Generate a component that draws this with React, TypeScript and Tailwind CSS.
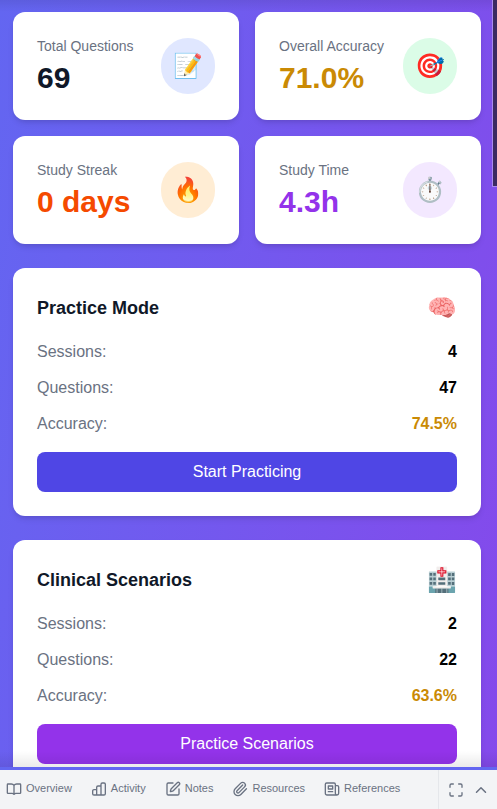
import type { ReactNode } from "react";
import { SquarePen, Paperclip, ChevronUp } from "lucide-react";

type Stat = { label: string; value: string; color: string; icon: string; iconBg: string };

const stats: Stat[] = [
  { label: "Total Questions", value: "69", color: "text-gray-900", icon: "📝", iconBg: "bg-indigo-100" },
  { label: "Overall Accuracy", value: "71.0%", color: "text-[#ca8a04]", icon: "🎯", iconBg: "bg-green-100" },
  { label: "Study Streak", value: "0 days", color: "text-[#f54a00]", icon: "🔥", iconBg: "bg-orange-100" },
  { label: "Study Time", value: "4.3h", color: "text-[#9333ea]", icon: "⏱️", iconBg: "bg-purple-100" },
];

const modes = [
  { title: "Practice Mode", icon: "🧠", sessions: "4", questions: "47", accuracy: "74.5%", action: "Start Practicing", button: "bg-[#4f46e5]" },
  { title: "Clinical Scenarios", icon: "🏥", sessions: "2", questions: "22", accuracy: "63.6%", action: "Practice Scenarios", button: "bg-[#9333ea]" },
];

function Icon({ children }: { children: ReactNode }) {
  return (
    <svg width="16" height="16" viewBox="0 0 24 24" fill="none" stroke="currentColor" strokeWidth="2" strokeLinecap="round" strokeLinejoin="round" aria-hidden="true">
      {children}
    </svg>
  );
}

const tabs = [
  {
    label: "Overview",
    icon: (
      <Icon>
        <path d="M12 6.500C11 5 9.500 4.500 8 4.500H3a1 1 0 0 0-1 1v12a1 1 0 0 0 1 1h6c1.500 0 2.500.5 3 1.500.5-1 1.500-1.500 3-1.500h6a1 1 0 0 0 1-1v-12a1 1 0 0 0-1-1h-5c-1.500 0-3 .5-4 2V20" />
      </Icon>
    ),
  },
  {
    label: "Activity",
    icon: (
      <Icon>
        <path d="M8.500 21V9.500A2 2 0 0 1 10.500 7.500H15M8.500 21H4.500A2 2 0 0 1 2.500 19v-4a2 2 0 0 1 2-2h4M8.500 21H15m0 0V5a2 2 0 0 1 2-2h2.500a2 2 0 0 1 2 2v14a2 2 0 0 1-2 2H15" />
      </Icon>
    ),
  },
  { label: "Notes", icon: <SquarePen size={16} /> },
  { label: "Resources", icon: <Paperclip size={16} /> },
  {
    label: "References",
    icon: (
      <Icon>
        <path d="M17 7h3a2 2 0 0 1 2 2v9.500a2.500 2.500 0 0 1-5 0V5a2 2 0 0 0-2-2H4a2 2 0 0 0-2 2v13.500A2.500 2.500 0 0 0 4.500 21h15" />
        <path d="M6.500 7.500h6.500v4.500H6.500zM6.500 16H13" />
      </Icon>
    ),
  },
];

function StatCard({ label, value, color, icon, iconBg }: Stat) {
  return (
    <div className="flex items-center justify-between rounded-xl bg-white p-6 shadow-md">
      <div>
        <p className="mb-1 text-sm whitespace-nowrap text-gray-500">{label}</p>
        <p className={`text-3xl font-bold whitespace-nowrap ${color}`}>{value}</p>
      </div>
      <div className={`rounded-full p-3 text-2xl ${iconBg}`}>{icon}</div>
    </div>
  );
}

function Row({ label, value, color }: { label: string; value: string; color: string }) {
  return (
    <div className="flex justify-between">
      <dt className="text-gray-500">{label}</dt>
      <dd className={`font-bold ${color}`}>{value}</dd>
    </div>
  );
}

export default function App() {
  return (
    <div className="flex h-screen flex-col overflow-hidden bg-linear-[100deg] from-[#6366f1] to-[#8549eb] font-['Liberation_Sans',Arial,sans-serif]">
      <main className="relative min-h-0 flex-1 overflow-hidden pt-3 pr-4 pl-[13px]">
        <section className="grid grid-cols-2 gap-4">
          {stats.map((s) => (
            <StatCard key={s.label} {...s} />
          ))}
        </section>
        {modes.map((m) => (
          <section key={m.title} className="mt-6 rounded-xl bg-white p-6 shadow-md">
            <div className="mb-4 flex items-center justify-between">
              <h2 className="text-lg font-bold text-gray-900">{m.title}</h2>
              <span className="text-2xl">{m.icon}</span>
            </div>
            <dl className="space-y-3">
              <Row label="Sessions:" value={m.sessions} color="text-black" />
              <Row label="Questions:" value={m.questions} color="text-black" />
              <Row label="Accuracy:" value={m.accuracy} color="text-[#ca8a04]" />
            </dl>
            <button className={`mt-4 w-full rounded-lg py-2 text-white ${m.button}`}>{m.action}</button>
          </section>
        ))}
        <div className="pointer-events-none absolute inset-x-0 top-0 h-3 bg-linear-to-b from-black/8 to-transparent" />
        <div className="pointer-events-none absolute inset-x-0 bottom-0 h-4 bg-linear-to-t from-black/8 to-transparent" />
        <div className="absolute top-0 right-0 h-[187px] w-[5px] border-b border-l border-[#a98bf0] bg-[#3b2a63]" />
      </main>
      <footer className="flex h-[42px] shrink-0 border-t-3 border-[#6366f1] bg-gray-100 text-[11px] text-gray-500">
        <nav className="flex flex-1 items-center gap-[19px] pb-0.5 pl-1.5">
          {tabs.map((t) => (
            <button key={t.label} className="flex items-center gap-1">
              {t.icon}
              {t.label}
            </button>
          ))}
        </nav>
        <div className="flex w-[59px] items-center gap-2 border-l border-gray-200 pl-[9px]">
          <button aria-label="Full screen">
            <Icon>
              <path d="M3 8V5a2 2 0 0 1 2-2h3M16 3h3a2 2 0 0 1 2 2v3M21 16v3a2 2 0 0 1-2 2h-3M8 21H5a2 2 0 0 1-2-2v-3" />
            </Icon>
          </button>
          <button aria-label="Expand panel">
            <ChevronUp size={18} />
          </button>
        </div>
      </footer>
    </div>
  );
}
